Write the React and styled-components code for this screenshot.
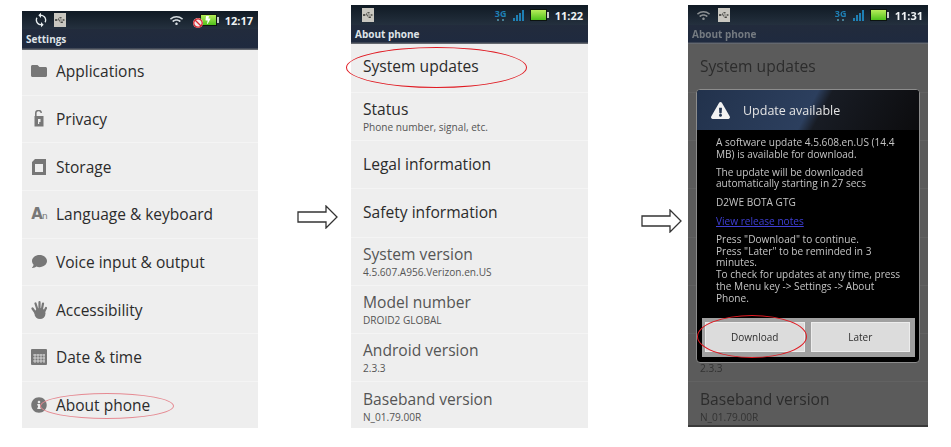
import React from 'react';
import styled, { createGlobalStyle } from 'styled-components';
import {
  FaFolder,
  FaInfoCircle,
  FaComment,
  FaUsb,
  FaWifi,
  FaExclamationTriangle,
  FaBan,
  FaBolt,
} from 'react-icons/fa';
import { MdSync } from 'react-icons/md';

const GlobalStyle = createGlobalStyle`
  body {
    margin: 0;
    background: #fff;
    font-family: "Open Sans", "Noto Sans", sans-serif;
  }
`;

const Page = styled.div`
  display: flex;
  align-items: flex-start;
  width: 951px;
  height: 447px;
  padding-left: 22px;
  box-sizing: border-box;
  overflow: hidden;
  filter: blur(0.35px);
`;

const Phone = styled.div`
  position: relative;
  flex: none;
  width: ${(p) => p.$width}px;
  height: ${(p) => p.$height}px;
  margin-top: ${(p) => p.$top}px;
  background: ${(p) => (p.$dim ? '#5b5b5b' : '#eeeeee')};
  box-shadow: ${(p) => (p.$dim ? 'inset 0 -2px 0 #3a3a3a' : 'none')};
  display: flex;
  flex-direction: column;
`;

const StatusBar = styled.div`
  flex: none;
  height: ${(p) => p.$height}px;
  display: flex;
  align-items: center;
  padding: 0 5px 0 ${(p) => p.$left}px;
  gap: 5px;
  background: linear-gradient(#101a24, #24303e);
  color: #e8eef0;
`;

const StatusSpacer = styled.div`
  flex: 1;
`;

const Clock = styled.span`
  font-size: 11px;
  font-weight: 700;
  color: #eef2f4;
  margin-left: 3px;
`;

const UsbTile = styled.span`
  width: 12px;
  height: 14px;
  display: flex;
  align-items: center;
  justify-content: center;
  background: #c9c7c0;
  color: #3c3c38;
  font-size: 10px;
`;

const ThreeG = styled.span`
  width: 14px;
  font-size: 9px;
  line-height: 8px;
  font-weight: 700;
  color: #1f7fb4;
  text-align: center;
  &::after {
    content: '';
    display: block;
    width: 8px;
    height: 2px;
    margin: 1px auto 0;
    background: radial-gradient(circle at 1px 1px, #4a7f94 1px, transparent 1px) 0 0 / 5px 2px;
  }
`;

const Bars = styled.span`
  display: flex;
  align-items: flex-end;
  gap: 1px;
  height: 11px;
  margin-right: 1px;
`;

const Bar = styled.i`
  display: block;
  width: 2px;
  height: ${(p) => p.$h}px;
  background: #1f7fb4;
`;

const Battery = styled.span`
  position: relative;
  width: 15px;
  height: 10px;
  display: flex;
  align-items: center;
  justify-content: center;
  background: linear-gradient(#b6ec5a, #4fc21c);
  border: 1px solid #0c1410;
  color: #fff;
  font-size: 8px;
  &::after {
    content: '';
    position: absolute;
    right: -3px;
    top: 2px;
    width: 2px;
    height: 6px;
    background: #c6ccc8;
  }
`;

const BlockedBadge = styled.span`
  color: #d8242c;
  background: #f2e8e8;
  border-radius: 50%;
  display: flex;
  font-size: 10px;
  margin-right: -8px;
  margin-top: 6px;
  z-index: 1;
`;

const WifiSlot = styled.span`
  display: flex;
  color: ${(p) => (p.$dim ? '#8a8f92' : '#d4dade')};
  font-size: 13px;
  margin-right: ${(p) => p.$gap}px;
`;

const TitleBar = styled.div`
  flex: none;
  height: ${(p) => p.$height}px;
  box-sizing: border-box;
  padding: 0 0 2px 4px;
  display: flex;
  align-items: center;
  font-size: 10px;
  font-weight: 700;
  color: ${(p) => (p.$dim ? '#747a80' : '#dfe3e8')};
  background: linear-gradient(#222b3c, #1f2a3f 88%, #77797c);
`;

const List = styled.div`
  display: flex;
  flex-direction: column;
`;

const SettingRow = styled.div`
  height: 47.7px;
  flex: none;
  box-sizing: border-box;
  display: flex;
  align-items: center;
  gap: 9px;
  padding-left: 9px;
  font-size: 15.5px;
  color: #2b2b2b;
  border-bottom: 1px solid #f4f4f4;
  &:first-child {
    height: 45.5px;
    padding-bottom: 3px;
  }
  &:last-child {
    height: 46.5px;
    border-bottom: 0;
  }
`;

const RowIcon = styled.span`
  width: 16px;
  height: 16px;
  flex: none;
  display: flex;
  align-items: center;
  justify-content: center;
  color: #777;
  font-size: 16px;
`;

const LangIcon = styled.span`
  font-family: "DejaVu Sans", sans-serif;
  font-size: 15px;
  font-weight: 700;
  letter-spacing: -1px;
  white-space: nowrap;
  small {
    font-size: 9px;
    font-weight: 400;
  }
`;

const DetailRow = styled.div`
  height: 48.2px;
  flex: none;
  box-sizing: border-box;
  display: flex;
  flex-direction: column;
  justify-content: center;
  padding-left: 12px;
  border-bottom: 1px solid ${(p) => (p.$dim ? '#626262' : '#f4f4f4')};
  color: ${(p) => (p.$dim ? '#2c2c2c' : p.$muted ? '#555' : '#2b2b2b')};
  &:first-child {
    height: 49px;
    padding-bottom: 3px;
  }
  &:last-child {
    height: 46px;
    padding-top: 2px;
    border-bottom: 0;
  }
`;

const DetailTitle = styled.div`
  height: 21px;
  font-size: 15.6px;
  line-height: 21px;
`;

const DetailSub = styled.div`
  font-size: 10.1px;
  line-height: 14px;
  color: ${(p) => (p.$dim ? '#333' : '#555')};
`;

const Arrow = styled.svg`
  flex: none;
  width: 41px;
  height: 24px;
  margin: ${(p) => p.$top}px ${(p) => p.$right}px 0 ${(p) => p.$left}px;
`;

const Ring = styled.div`
  position: absolute;
  left: ${(p) => p.$x}px;
  top: ${(p) => p.$y}px;
  width: ${(p) => p.$w}px;
  height: ${(p) => p.$h}px;
  box-sizing: border-box;
  border: 1.3px solid ${(p) => p.$color};
  border-radius: 50%;
`;

const Dialog = styled.div`
  position: absolute;
  left: 8px;
  top: 84px;
  width: 224px;
  height: 274px;
  box-sizing: border-box;
  border: 1px solid #8c8c8c;
  border-radius: 4px;
  background: #000;
  display: flex;
  flex-direction: column;
  overflow: hidden;
`;

const DialogHead = styled.div`
  flex: none;
  height: 40px;
  display: flex;
  align-items: center;
  gap: 13px;
  padding-left: 14px;
  font-size: 12.5px;
  color: #e4e4e4;
  background: linear-gradient(118deg, #22324c 0, #2c3f5e 50%, #181c24 56%, #0c0c0e 100%);
`;

const WarnIcon = styled.span`
  display: flex;
  color: #f2f2f2;
  font-size: 19px;
`;

const DialogBody = styled.div`
  flex: 1;
  padding: 7px 0 0 19px;
  font-size: 10.1px;
  line-height: 11.8px;
  color: #c4c4c4;
`;

const Para = styled.p`
  margin: 0 0 ${(p) => p.$gap}px;
  white-space: nowrap;
`;

const NotesLink = styled.a`
  color: #3f3fd6;
  text-decoration: underline;
`;

const ButtonBar = styled.div`
  flex: none;
  height: 39px;
  margin: 0 4px 5px 5px;
  box-sizing: border-box;
  padding: 4px 5px 5px 3px;
  display: flex;
  gap: 6px;
  background: #a0a0a0;
`;

const DialogButton = styled.div`
  flex: 1;
  display: flex;
  align-items: center;
  justify-content: center;
  font-size: 10px;
  color: #2e2e2e;
  background: #dcdcdc;
  border: 1px solid #ececec;
`;

const PrivacyIcon = () => (
  <svg width="10" height="17" viewBox="0 0 10 17">
    <path
      fill="#777"
      fillRule="evenodd"
      d="M1 6V3.5a3.5 3.5 0 0 1 7-.5H6.6a2 2 0 0 0-4 .5V6H9.5v10.5H.5V6zm3 3v5h1.2v-2h1.3V9z"
    />
  </svg>
);

const StorageIcon = () => (
  <svg width="14" height="16" viewBox="0 0 14 16">
    <path
      fill="#777"
      fillRule="evenodd"
      d="M3 0h11v16H0V3zm0 5v8h8V5z"
    />
  </svg>
);

const CalendarIcon = () => (
  <svg width="16" height="16" viewBox="0 0 16 16">
    <rect width="16" height="16" rx="1" fill="#777" />
    <path
      stroke="#e4e4e4"
      strokeWidth="0.8"
      d="M2 6h12M2 9h12M2 12h12M4 5v9M7 5v9M10 5v9M13 5v9"
    />
  </svg>
);

const HandIcon = () => (
  <svg width="16" height="18" viewBox="0 0 16 18">
    <ellipse cx="9" cy="12.5" rx="5.5" ry="5.5" fill="#777" />
    <path
      stroke="#777"
      strokeWidth="2.2"
      strokeLinecap="round"
      d="M1.5 7.5l3.5 5M4.5 2.5l2.5 8M8.5 1.2v9M12 2.5l-1.5 8M15 7l-2.5 5"
    />
  </svg>
);

const settings = [
  ['Applications', <FaFolder />],
  ['Privacy', <PrivacyIcon />],
  ['Storage', <StorageIcon />],
  ['Language & keyboard', <LangIcon>A<small>n</small></LangIcon>],
  ['Voice input & output', <FaComment size={15} />],
  ['Accessibility', <HandIcon />],
  ['Date & time', <CalendarIcon />],
  ['About phone', <FaInfoCircle />],
];

const details = [
  { title: 'System updates' },
  { title: 'Status', sub: 'Phone number, signal, etc.', covered: true },
  { title: 'Legal information', covered: true },
  { title: 'Safety information', covered: true },
  { title: 'System version', sub: '4.5.607.A956.Verizon.en.US', muted: true, covered: true },
  { title: 'Model number', sub: 'DROID2 GLOBAL', muted: true, covered: true },
  { title: 'Android version', sub: '2.3.3', muted: true, titleCovered: true },
  { title: 'Baseband version', sub: 'N_01.79.00R', muted: true },
];

// on the dimmed screen the dialog hides most rows, so only what shows is drawn
const DetailList = ({ dim }) => (
  <List>
    {details.map(({ title, sub, muted, covered, titleCovered }) => (
      <DetailRow key={title} $dim={dim} $muted={muted}>
        {!(dim && covered) && <DetailTitle>{!(dim && titleCovered) && title}</DetailTitle>}
        {sub && !(dim && covered) && <DetailSub $dim={dim}>{sub}</DetailSub>}
      </DetailRow>
    ))}
  </List>
);

const NetworkIcons = () => (
  <>
    <ThreeG>3G</ThreeG>
    <Bars>
      <Bar $h={3} />
      <Bar $h={6} />
      <Bar $h={8} />
      <Bar $h={11} />
    </Bars>
    <Battery />
  </>
);

const NextArrow = ({ top, left, right }) => (
  <Arrow $top={top} $left={left} $right={right} viewBox="0 0 41 24">
    <path
      d="M1 7h28V1l11 11-11 11v-6H1z"
      fill="#fff"
      stroke="#333"
      strokeWidth="1.3"
    />
  </Arrow>
);

const App = () => (
  <Page>
    <GlobalStyle />

    <Phone $width={236} $height={417} $top={11}>
      <StatusBar $height={18} $left={11}>
        <MdSync size={16} />
        <UsbTile><FaUsb /></UsbTile>
        <StatusSpacer />
        <WifiSlot $gap={5}><FaWifi /></WifiSlot>
        <BlockedBadge><FaBan /></BlockedBadge>
        <Battery><FaBolt /></Battery>
        <Clock>12:17</Clock>
      </StatusBar>
      <TitleBar $height={21}>Settings</TitleBar>
      <List>
        {settings.map(([label, icon]) => (
          <SettingRow key={label}>
            <RowIcon>{icon}</RowIcon>
            {label}
          </SettingRow>
        ))}
      </List>
      <Ring $x={18} $y={382} $w={134} $h={26} $color="#e58a92" />
    </Phone>

    <NextArrow top={205} left={39} right={13} />

    <Phone $width={237} $height={423} $top={5}>
      <StatusBar $height={20} $left={11}>
        <UsbTile><FaUsb /></UsbTile>
        <StatusSpacer />
        <NetworkIcons />
        <Clock>11:22</Clock>
      </StatusBar>
      <TitleBar $height={19}>About phone</TitleBar>
      <DetailList />
      <Ring $x={-5} $y={42} $w={181} $h={41} $color="#e01a22" />
    </Phone>

    <NextArrow top={209} left={53} right={6} />

    <Phone $width={240} $height={422} $top={5} $dim>
      <StatusBar $height={20} $left={9}>
        <WifiSlot $dim $gap={3}><FaWifi /></WifiSlot>
        <UsbTile><FaUsb /></UsbTile>
        <StatusSpacer />
        <NetworkIcons />
        <Clock>11:31</Clock>
      </StatusBar>
      <TitleBar $height={19} $dim>About phone</TitleBar>
      <DetailList dim />
      <Dialog>
        <DialogHead>
          <WarnIcon><FaExclamationTriangle /></WarnIcon>
          Update available
        </DialogHead>
        <DialogBody>
          <Para $gap={6}>A software update 4.5.608.en.US (14.4<br />MB) is available for download.</Para>
          <Para $gap={7}>The update will be downloaded<br />automatically starting in 27 secs</Para>
          <Para $gap={7}>D2WE BOTA GTG</Para>
          <Para $gap={6}><NotesLink>View release notes</NotesLink></Para>
          <Para $gap={0}>
            Press "Download" to continue.<br />
            Press "Later" to be reminded in 3<br />
            minutes.<br />
            To check for updates at any time, press<br />
            the Menu key -&gt; Settings -&gt; About<br />
            Phone.
          </Para>
        </DialogBody>
        <ButtonBar>
          <DialogButton>Download</DialogButton>
          <DialogButton>Later</DialogButton>
        </ButtonBar>
      </Dialog>
      <Ring $x={9} $y={310} $w={110} $h={43} $color="#e01a22" />
    </Phone>
  </Page>
);

export default App;
